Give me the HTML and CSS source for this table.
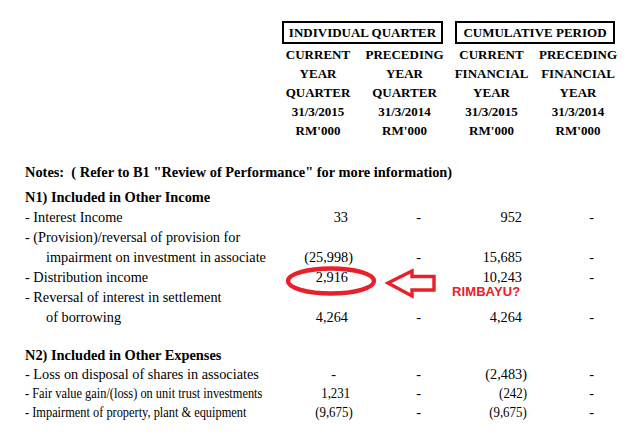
FILE: index.html
```html
<!DOCTYPE html>
<html>
<head>
<meta charset="utf-8">
<link rel="stylesheet" href="styles.css">
</head>
<body>
<div class="page">
  <div class="head-grid">
    <div class="box box-ind">INDIVIDUAL QUARTER</div>
    <div class="box box-cum">CUMULATIVE PERIOD</div>
  </div>
  <div class="head-grid cols">
    <div class="hcell c1">CURRENT<br>YEAR<br>QUARTER<br>31/3/2015<br>RM'000</div>
    <div class="hcell c2">PRECEDING<br>YEAR<br>QUARTER<br>31/3/2014<br>RM'000</div>
    <div class="hcell c3">CURRENT<br>FINANCIAL<br>YEAR<br>31/3/2015<br>RM'000</div>
    <div class="hcell c4">PRECEDING<br>FINANCIAL<br>YEAR<br>31/3/2014<br>RM'000</div>
  </div>

  <div class="notes">Notes:&nbsp; ( Refer to B1 "Review of Performance" for more information)</div>

  <div class="section-title">N1) Included in Other Income</div>
  <div class="row">
    <div class="label">- Interest Income</div>
    <div class="num n1">33</div><div class="dash d2">-</div>
    <div class="num n3">952</div><div class="dash d4">-</div>
  </div>
  <div class="row">
    <div class="label">- (Provision)/reversal of provision for</div>
  </div>
  <div class="row">
    <div class="label indent">impairment on investment in associate</div>
    <div class="num n1 neg">(25,998)</div><div class="dash d2">-</div>
    <div class="num n3">15,685</div><div class="dash d4">-</div>
  </div>
  <div class="row">
    <div class="label">- Distribution income</div>
    <div class="num n1">2,916</div><div class="dash d2"></div>
    <div class="num n3">10,243</div><div class="dash d4">-</div>
  </div>
  <div class="row">
    <div class="label">- Reversal of interest in settlement</div>
  </div>
  <div class="row">
    <div class="label indent">of borrowing</div>
    <div class="num n1">4,264</div><div class="dash d2">-</div>
    <div class="num n3">4,264</div><div class="dash d4">-</div>
  </div>

  <div class="section-title n2">N2) Included in Other Expenses</div>
  <div class="row r2">
    <div class="label">- Loss on disposal of shares in associates</div>
    <div class="dash d1">-</div><div class="dash d2">-</div>
    <div class="num n3 neg">(2,483)</div><div class="dash d4">-</div>
  </div>
  <div class="row r2">
    <div class="label"><span class="narrow">- Fair value gain/(loss) on unit trust investments</span></div>
    <div class="num n1 mid"><span class="narrow-r">1,231</span></div><div class="dash d2">-</div>
    <div class="num n3 neg"><span class="narrow-r">(242)</span></div><div class="dash d4">-</div>
  </div>
  <div class="row r2">
    <div class="label"><span class="narrow">- Impairment of property, plant &amp; equipment</span></div>
    <div class="num n1 neg"><span class="narrow-r">(9,675)</span></div><div class="dash d2">-</div>
    <div class="num n3 neg"><span class="narrow-r">(9,675)</span></div><div class="dash d4">-</div>
  </div>

  <svg class="annot" width="629" height="445" viewBox="0 0 629 445">
    <ellipse cx="331" cy="281" rx="43" ry="12.5" fill="none" stroke="#e8202a" stroke-width="4.4"/>
    <polygon points="388,283 412,271 412,276.5 434,276.5 434,290 412,290 412,296" fill="none" stroke="#e8202a" stroke-width="3.4" stroke-linejoin="miter"/>
  </svg>
  <div class="rimbayu">RIMBAYU?</div>
</div>
</body>
</html>
```

FILE: styles.css
```css
html, body {
  margin: 0;
  padding: 0;
  background: #ffffff;
}
.page {
  position: relative;
  width: 629px;
  height: 445px;
  padding-top: 21px;
  box-sizing: border-box;
  font-family: "Liberation Serif", "Times New Roman", serif;
  color: #000;
  overflow: hidden;
}
.head-grid {
  display: grid;
  grid-template-columns: 275px 86px 87px 87px 86px;
}
.box {
  border: 2px solid #000;
  height: 23px;
  box-sizing: border-box;
  font-weight: bold;
  font-size: 13px;
  line-height: 19px;
  text-align: center;
  white-space: nowrap;
}
.box-ind {
  grid-column: 2 / 4;
  margin-left: 7px;
  margin-right: 5px;
}
.box-cum {
  grid-column: 4 / 6;
  margin-left: 7px;
  margin-right: 6px;
}
.cols {
  margin-top: 1px;
}
.hcell {
  font-weight: bold;
  font-size: 13px;
  line-height: 19px;
  text-align: center;
  white-space: nowrap;
}
.c1 { grid-column: 2; }
.c2 { grid-column: 3; }
.c3 { grid-column: 4; }
.c4 { grid-column: 5; }

.notes {
  margin-top: 22px;
  padding-left: 25px;
  font-weight: bold;
  font-size: 14.4px;
  line-height: 20px;
  white-space: nowrap;
}
.section-title {
  margin-top: 5px;
  padding-left: 25px;
  font-weight: bold;
  font-size: 14.4px;
  line-height: 20px;
  white-space: nowrap;
}
.section-title.n2 {
  margin-top: 18px;
}
.row {
  display: grid;
  grid-template-columns: 275px 86px 87px 87px 86px;
  font-size: 14.3px;
  line-height: 20px;
  height: 20px;
}
.row.r2 {
  height: 19px;
  line-height: 19px;
}
.label {
  padding-left: 25px;
  white-space: nowrap;
}
.label.indent {
  padding-left: 46px;
}
.num, .dash {
  text-align: right;
  white-space: nowrap;
}
.num {
  padding-right: 13px;
}
.num.neg {
  padding-right: 8px;
}
.num.mid {
  padding-right: 11px;
}
.dash {
  padding-right: 27px;
}
.dash.d1 {
  padding-right: 25px;
}
.n1, .d1 { grid-column: 2; }
.d2 { grid-column: 3; }
.n3 { grid-column: 4; }
.d4 { grid-column: 5; }

.narrow {
  display: inline-block;
  transform: scaleX(0.865);
  transform-origin: left center;
}
.narrow-r {
  display: inline-block;
  transform: scaleX(0.9);
  transform-origin: right center;
}

.annot {
  position: absolute;
  left: 0;
  top: 0;
  pointer-events: none;
}
.rimbayu {
  position: absolute;
  left: 452px;
  top: 285px;
  font-family: "Liberation Sans", Arial, sans-serif;
  font-weight: bold;
  font-size: 13px;
  line-height: 13px;
  color: #e8202a;
  letter-spacing: 0.1px;
}
```
